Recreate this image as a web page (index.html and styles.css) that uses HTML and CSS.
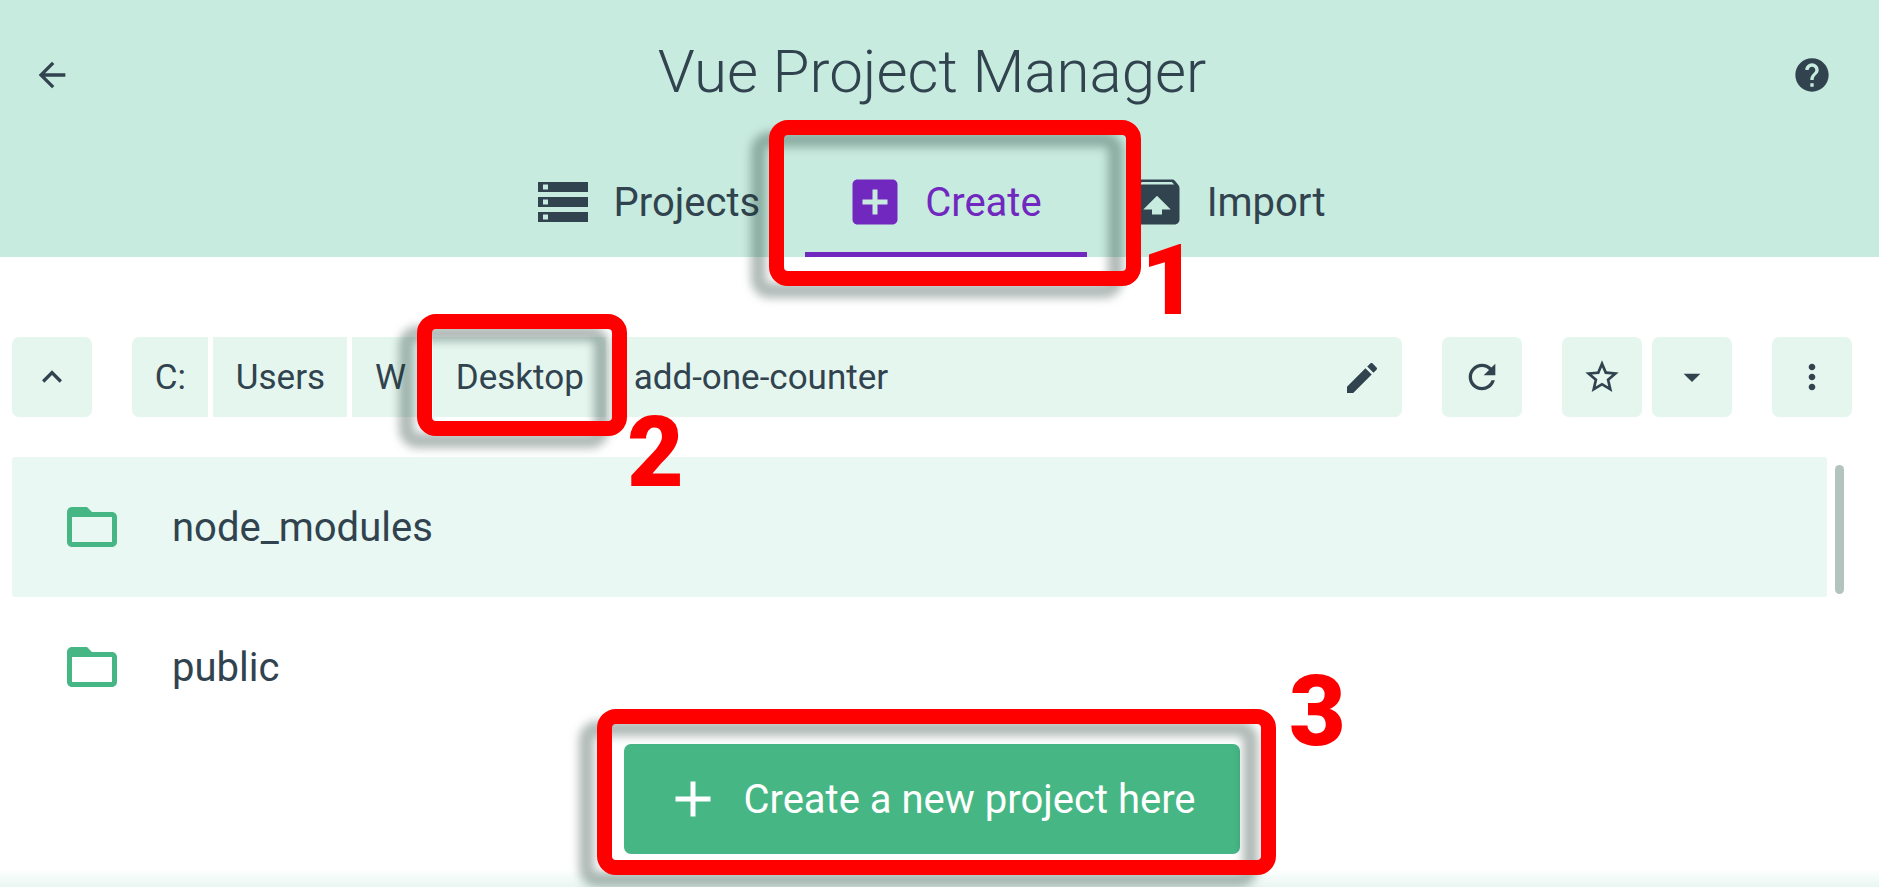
FILE: index.html
```html
<!DOCTYPE html>
<html lang="en">
<head>
<meta charset="utf-8">
<title>Vue Project Manager</title>
<link rel="stylesheet" href="styles.css">
</head>
<body>
<header class="header">
  <div class="top-bar">
    <a class="top-button"><svg class="icon" viewBox="0 0 24 24"><path d="M20 11H7.83l5.59-5.59L12 4l-8 8 8 8 1.41-1.41L7.83 13H20v-2z"/></svg></a>
    <h1 class="title">Vue Project Manager</h1>
    <a class="top-button"><svg class="icon" viewBox="0 0 24 24"><path d="M12 2C6.48 2 2 6.48 2 12s4.48 10 10 10 10-4.480 10-10S17.520 2 12 2zm1 17h-2v-2h2v2zm2.070-7.750l-.9.920C13.450 12.900 13 13.500 13 15h-2v-.5c0-1.100.450-2.100 1.170-2.830l1.240-1.260c.370-.360.590-.860.590-1.410 0-1.100-.9-2-2-2s-2 .9-2 2H8c0-2.210 1.790-4 4-4s4 1.790 4 4c0 .880-.360 1.680-.930 2.250z"/></svg></a>
  </div>
  <nav class="tabs">
    <a class="tab"><svg class="icon large" viewBox="0 0 24 24"><path d="M2 20h20v-4H2v4zm2-3h2v2H4v-2zM2 4v4h20V4H2zm4 3H4V5h2v2zm-4 7h20v-4H2v4zm2-3h2v2H4v-2z"/></svg><span class="label">Projects</span></a>
    <a class="tab active"><svg class="icon large" viewBox="0 0 24 24"><path d="M19 3H5c-1.110 0-2 .9-2 2v14c0 1.100.890 2 2 2h14c1.100 0 2-.9 2-2V5c0-1.100-.9-2-2-2zm-2 10h-4v4h-2v-4H7v-2h4V7h2v4h4v2z"/></svg><span class="label">Create</span></a>
    <a class="tab"><svg class="icon large" viewBox="0 0 24 24"><path d="M20.550 5.220l-1.390-1.680C18.880 3.210 18.470 3 18 3H6c-.470 0-.880.210-1.150.550L3.460 5.220C3.170 5.570 3 6.010 3 6.500V19c0 1.100.890 2 2 2h14c1.100 0 2-.9 2-2V6.500c0-.490-.170-.930-.450-1.280zM12 9.500l5.500 5.500H14v2h-4v-2H6.500L12 9.500zM5.120 5l.820-1h12l.930 1H5.120z"/></svg><span class="label">Import</span></a>
  </nav>
</header>

<main class="explorer">
  <div class="toolbar">
    <button class="tool up"><svg class="icon" viewBox="0 0 24 24"><path d="M7.410 15.410L12 10.830l4.590 4.580L18 14l-6-6-6 6z"/></svg></button>
    <div class="path">
      <span class="part">C:</span>
      <span class="part">Users</span>
      <span class="part">W</span>
      <span class="part">Desktop</span>
      <span class="part last">add-one-counter<svg class="icon" viewBox="0 0 24 24"><path d="M3 17.250V21h3.750L17.810 9.940l-3.750-3.750L3 17.250zM20.710 7.040c.390-.390.390-1.020 0-1.410l-2.340-2.340c-.390-.390-1.020-.390-1.410 0l-1.830 1.830 3.750 3.750 1.830-1.830z"/></svg></span>
    </div>
    <button class="tool refresh"><svg class="icon" viewBox="0 0 24 24"><path d="M17.650 6.350C16.200 4.900 14.210 4 12 4c-4.420 0-7.990 3.580-7.990 8s3.570 8 7.990 8c3.730 0 6.840-2.550 7.730-6h-2.080c-.820 2.330-3.040 4-5.650 4-3.310 0-6-2.690-6-6s2.690-6 6-6c1.660 0 3.140.690 4.220 1.780L13 11h7V4l-2.350 2.350z"/></svg></button>
    <div class="favorites">
      <button class="tool"><svg class="icon" viewBox="0 0 24 24"><path d="M22 9.240l-7.190-.620L12 2 9.190 8.630 2 9.240l5.460 4.730L5.820 21 12 17.270 18.180 21l-1.630-7.030L22 9.240zM12 15.400l-3.760 2.270 1-4.280-3.320-2.880 4.380-.380L12 6.100l1.710 4.040 4.380.380-3.320 2.880 1 4.280L12 15.400z"/></svg></button>
      <button class="tool"><svg class="icon" viewBox="0 0 24 24"><path d="M7 10l5 5 5-5z"/></svg></button>
    </div>
    <button class="tool"><svg class="icon" viewBox="0 0 24 24"><path d="M12 8c1.100 0 2-.9 2-2s-.9-2-2-2-2 .9-2 2 .9 2 2 2zm0 2c-1.100 0-2 .9-2 2s.9 2 2 2 2-.9 2-2-.9-2-2-2zm0 6c-1.100 0-2 .9-2 2s.9 2 2 2 2-.9 2-2-.9-2-2-2z"/></svg></button>
  </div>

  <div class="folders">
    <div class="folder-list">
      <div class="folder hovered"><svg class="icon large" viewBox="0 0 24 24"><path d="M20 6h-8l-2-2H4c-1.100 0-1.990.9-1.990 2L2 18c0 1.100.9 2 2 2h16c1.100 0 2-.9 2-2V8c0-1.100-.9-2-2-2zm0 12H4V8h16v10z"/></svg><span class="label">node_modules</span></div>
      <div class="folder"><svg class="icon large" viewBox="0 0 24 24"><path d="M20 6h-8l-2-2H4c-1.100 0-1.990.9-1.990 2L2 18c0 1.100.9 2 2 2h16c1.100 0 2-.9 2-2V8c0-1.100-.9-2-2-2zm0 12H4V8h16v10z"/></svg><span class="label">public</span></div>
    </div>
    <div class="scroll-thumb"></div>
  </div>

  <div class="actions">
    <button class="create-button"><svg class="icon large" viewBox="0 0 24 24"><path d="M19 13h-6v6h-2v-6H5v-2h6V5h2v6h6v2z"/></svg><span class="label">Create a new project here</span></button>
  </div>
</main>
<div class="footer-shade"></div>

<div class="mark mark-create"></div>
<div class="mark mark-desktop"></div>
<div class="mark mark-button"></div>
<span class="step step-one">1</span>
<span class="step step-two">2</span>
<span class="step step-three">3</span>
</body>
</html>
```

FILE: styles.css
```css
* { box-sizing: border-box; }

body {
  position: relative;
  display: flex;
  flex-direction: column;
  width: 1879px;
  height: 887px;
  margin: 0;
  overflow: hidden;
  background: #fff;
  color: #30434e;
  font: 400 40px/60px Roboto, "Liberation Sans", sans-serif;
}

button {
  border: 0;
  padding: 0;
  font: inherit;
}

.icon {
  display: block;
  flex: none;
  width: 40px;
  height: 40px;
  fill: currentColor;
}

.icon.large {
  width: 60px;
  height: 60px;
}

.label { padding-top: 2px; }

/* Header */
.header {
  flex: none;
  height: 257px;
  padding: 0 27px 0 12px;
  background: #c8ebdf;
}

.top-bar {
  display: flex;
  align-items: center;
  justify-content: space-between;
  height: 147px;
  padding-top: 3px;
}

.top-button {
  display: flex;
  align-items: center;
  justify-content: center;
  width: 80px;
  height: 80px;
}

.title {
  margin: 0 0 7px;
  font-size: 60px;
  font-weight: 300;
  line-height: 80px;
}

.tabs {
  display: flex;
  justify-content: center;
  height: 110px;
}

.tab {
  display: flex;
  align-items: center;
  gap: 20px;
  padding: 0 45px 0 40px;
}

.tab.active {
  color: #7028be;
  box-shadow: inset 0 -5px #7028be;
}

/* Path toolbar */
.explorer {
  display: flex;
  flex-direction: column;
  flex: 1;
  padding: 80px 27px 0 12px;
}

.toolbar {
  display: flex;
  gap: 40px;
  height: 80px;
}

.tool {
  display: flex;
  align-items: center;
  justify-content: center;
  flex: none;
  width: 80px;
  height: 80px;
  border-radius: 7px;
  background: #e5f6ef;
  color: inherit;
}

.path {
  display: flex;
  flex: 1;
  gap: 5px;
  overflow: hidden;
  border-radius: 7px;
  font-size: 35px;
  line-height: 80px;
}

.part {
  height: 80px;
  padding: 1px 22px 0 22.8px;
  background: #e5f6ef;
}

.part.last {
  display: flex;
  align-items: center;
  justify-content: space-between;
  flex: 1;
  padding-right: 20px;
}

.favorites {
  display: flex;
  gap: 10px;
}

/* Folder list */
.folders {
  display: flex;
  gap: 8px;
  height: 280px;
  margin-top: 40px;
}

.folder-list { width: 1815px; }

.folder {
  display: flex;
  align-items: center;
  gap: 50px;
  height: 140px;
  padding: 0 50px;
  border-radius: 3px;
}

.folder.hovered { background: #e9f8f2; }

.folder .icon { color: #46b784; }

.scroll-thumb {
  width: 9px;
  height: 129px;
  margin-top: 8px;
  border-radius: 5px;
  background: #b2c4bd;
}

.actions {
  display: flex;
  justify-content: center;
  margin-top: 7px;
}

.create-button {
  display: flex;
  align-items: center;
  justify-content: center;
  gap: 20px;
  width: 616px;
  height: 110px;
  padding-right: 5px;
  border-radius: 7px;
  background: #46b784;
  color: #fff;
}

.footer-shade {
  position: absolute;
  left: 0;
  right: 0;
  bottom: 0;
  height: 18px;
  background: linear-gradient(#fff, #e8f6f1);
}

/* Callouts laid over the page */
.mark {
  position: absolute;
  border: 15px solid #f00;
  border-radius: 19px;
  filter: drop-shadow(-18px 12px 5px rgba(20, 50, 40, 0.34));
}

.mark-create {
  left: 769px;
  top: 120px;
  width: 372px;
  height: 166px;
}

.mark-desktop {
  left: 417px;
  top: 314px;
  width: 210px;
  height: 122px;
}

.mark-button {
  left: 597px;
  top: 709px;
  width: 679px;
  height: 166px;
}

.step {
  position: absolute;
  color: #f00;
  font-size: 98px;
  font-weight: 900;
  line-height: 100px;
}

.step-one { left: 1141px; top: 231px; }
.step-two { left: 627px; top: 403px; }
.step-three { left: 1289px; top: 662px; }
```
